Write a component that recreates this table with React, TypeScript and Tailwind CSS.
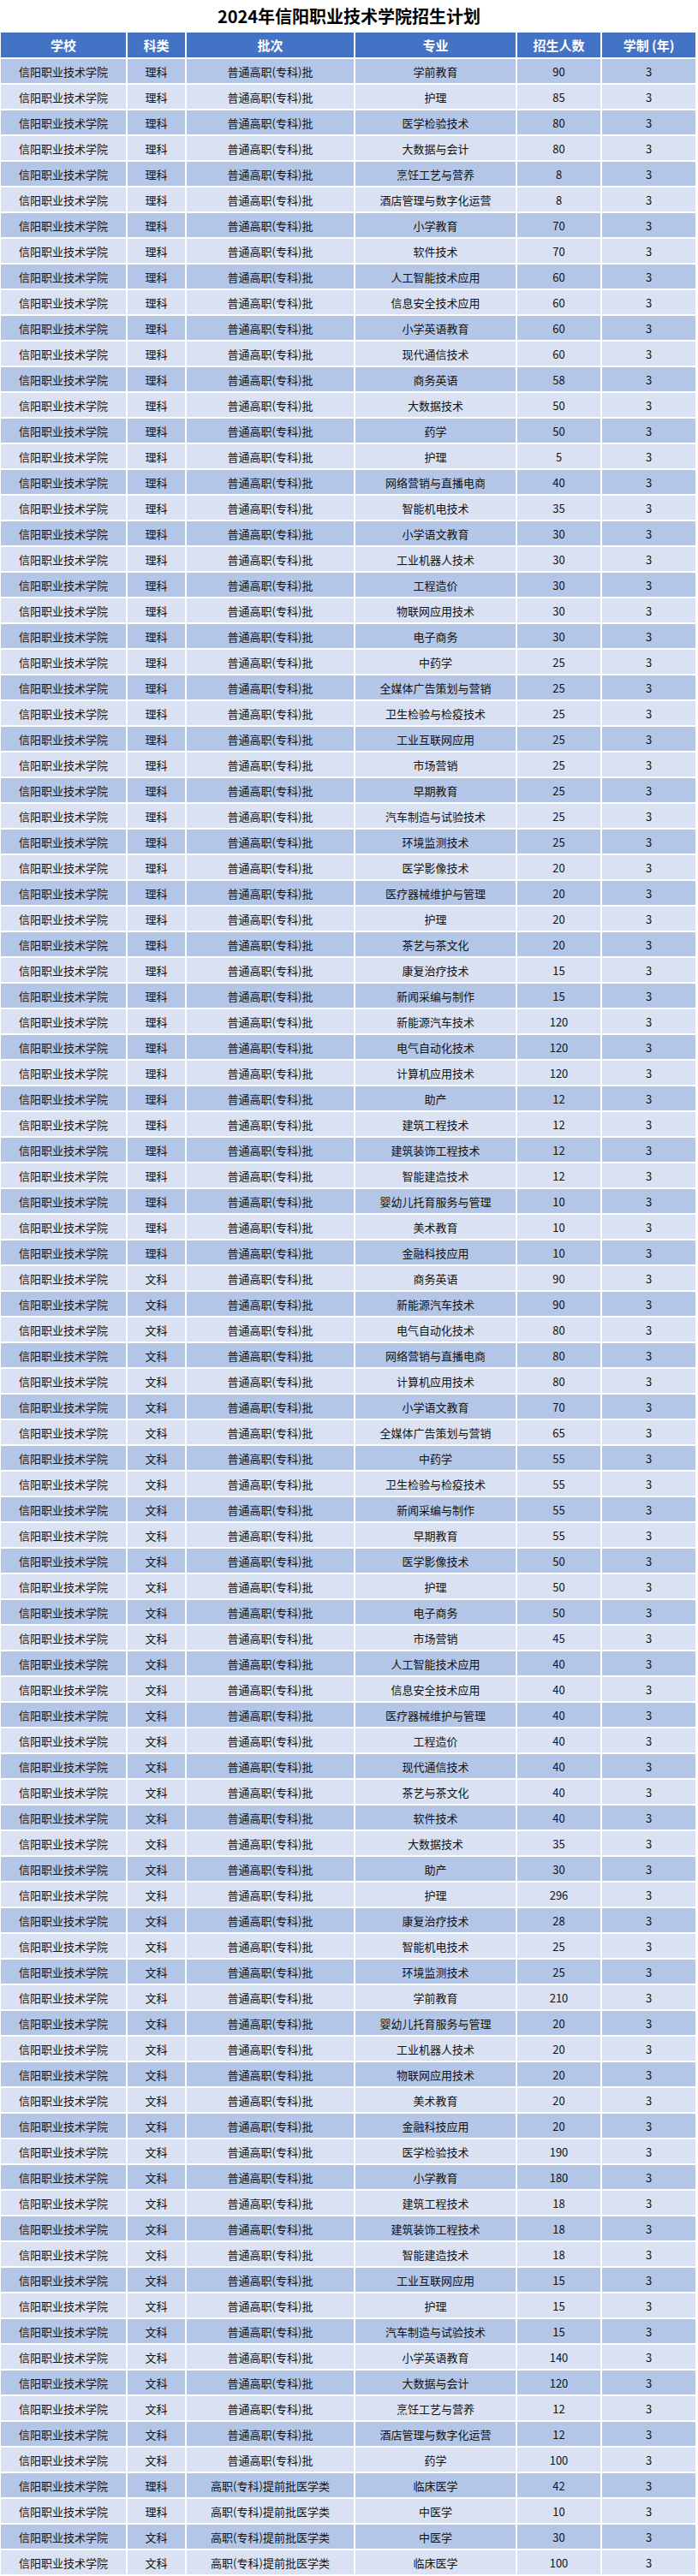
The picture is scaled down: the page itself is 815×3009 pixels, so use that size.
import React from "react";

const L = "理科";
const W = "文科";
const P = "普通高职(专科)批";
const T = "高职(专科)提前批医学类";

const rows: [string, string, string, string][] = [
  [L, P, "学前教育", "90"],
  [L, P, "护理", "85"],
  [L, P, "医学检验技术", "80"],
  [L, P, "大数据与会计", "80"],
  [L, P, "烹饪工艺与营养", "8"],
  [L, P, "酒店管理与数字化运营", "8"],
  [L, P, "小学教育", "70"],
  [L, P, "软件技术", "70"],
  [L, P, "人工智能技术应用", "60"],
  [L, P, "信息安全技术应用", "60"],
  [L, P, "小学英语教育", "60"],
  [L, P, "现代通信技术", "60"],
  [L, P, "商务英语", "58"],
  [L, P, "大数据技术", "50"],
  [L, P, "药学", "50"],
  [L, P, "护理", "5"],
  [L, P, "网络营销与直播电商", "40"],
  [L, P, "智能机电技术", "35"],
  [L, P, "小学语文教育", "30"],
  [L, P, "工业机器人技术", "30"],
  [L, P, "工程造价", "30"],
  [L, P, "物联网应用技术", "30"],
  [L, P, "电子商务", "30"],
  [L, P, "中药学", "25"],
  [L, P, "全媒体广告策划与营销", "25"],
  [L, P, "卫生检验与检疫技术", "25"],
  [L, P, "工业互联网应用", "25"],
  [L, P, "市场营销", "25"],
  [L, P, "早期教育", "25"],
  [L, P, "汽车制造与试验技术", "25"],
  [L, P, "环境监测技术", "25"],
  [L, P, "医学影像技术", "20"],
  [L, P, "医疗器械维护与管理", "20"],
  [L, P, "护理", "20"],
  [L, P, "茶艺与茶文化", "20"],
  [L, P, "康复治疗技术", "15"],
  [L, P, "新闻采编与制作", "15"],
  [L, P, "新能源汽车技术", "120"],
  [L, P, "电气自动化技术", "120"],
  [L, P, "计算机应用技术", "120"],
  [L, P, "助产", "12"],
  [L, P, "建筑工程技术", "12"],
  [L, P, "建筑装饰工程技术", "12"],
  [L, P, "智能建造技术", "12"],
  [L, P, "婴幼儿托育服务与管理", "10"],
  [L, P, "美术教育", "10"],
  [L, P, "金融科技应用", "10"],
  [W, P, "商务英语", "90"],
  [W, P, "新能源汽车技术", "90"],
  [W, P, "电气自动化技术", "80"],
  [W, P, "网络营销与直播电商", "80"],
  [W, P, "计算机应用技术", "80"],
  [W, P, "小学语文教育", "70"],
  [W, P, "全媒体广告策划与营销", "65"],
  [W, P, "中药学", "55"],
  [W, P, "卫生检验与检疫技术", "55"],
  [W, P, "新闻采编与制作", "55"],
  [W, P, "早期教育", "55"],
  [W, P, "医学影像技术", "50"],
  [W, P, "护理", "50"],
  [W, P, "电子商务", "50"],
  [W, P, "市场营销", "45"],
  [W, P, "人工智能技术应用", "40"],
  [W, P, "信息安全技术应用", "40"],
  [W, P, "医疗器械维护与管理", "40"],
  [W, P, "工程造价", "40"],
  [W, P, "现代通信技术", "40"],
  [W, P, "茶艺与茶文化", "40"],
  [W, P, "软件技术", "40"],
  [W, P, "大数据技术", "35"],
  [W, P, "助产", "30"],
  [W, P, "护理", "296"],
  [W, P, "康复治疗技术", "28"],
  [W, P, "智能机电技术", "25"],
  [W, P, "环境监测技术", "25"],
  [W, P, "学前教育", "210"],
  [W, P, "婴幼儿托育服务与管理", "20"],
  [W, P, "工业机器人技术", "20"],
  [W, P, "物联网应用技术", "20"],
  [W, P, "美术教育", "20"],
  [W, P, "金融科技应用", "20"],
  [W, P, "医学检验技术", "190"],
  [W, P, "小学教育", "180"],
  [W, P, "建筑工程技术", "18"],
  [W, P, "建筑装饰工程技术", "18"],
  [W, P, "智能建造技术", "18"],
  [W, P, "工业互联网应用", "15"],
  [W, P, "护理", "15"],
  [W, P, "汽车制造与试验技术", "15"],
  [W, P, "小学英语教育", "140"],
  [W, P, "大数据与会计", "120"],
  [W, P, "烹饪工艺与营养", "12"],
  [W, P, "酒店管理与数字化运营", "12"],
  [W, P, "药学", "100"],
  [L, T, "临床医学", "42"],
  [L, T, "中医学", "10"],
  [W, T, "中医学", "30"],
  [W, T, "临床医学", "100"],
];

const headers = ["学校", "科类", "批次", "专业", "招生人数", "学制 (年)"];

export default function App() {
  return (
    <div className="w-[815px] bg-white font-['Microsoft_YaHei','Noto_Sans_CJK_SC',sans-serif] text-[#111]">
      <div className="h-[38px] flex items-center justify-center text-[20px] font-bold leading-none text-black">
        2024年信阳职业技术学院招生计划
      </div>
      <div className="flex flex-col gap-y-[2px] pl-[1px] pr-[3px] pb-[2px]">
        <div className="grid grid-cols-[146px_67px_195px_187px_97px_109px] gap-x-[2px] h-[29px]">
          {headers.map((h) => (
            <div
              key={h}
              className="bg-[#4472c4] text-white font-bold text-[15px] flex items-center justify-center leading-none"
            >
              {h}
            </div>
          ))}
        </div>
        {rows.map((r, i) => {
          const bg = i % 2 === 0 ? "bg-[#b4c6e7]" : "bg-[#d9e1f2]";
          const cells = ["信阳职业技术学院", r[0], r[1], r[2], r[3], "3"];
          return (
            <div
              key={i}
              className="grid grid-cols-[146px_67px_195px_187px_97px_109px] gap-x-[2px] h-[28px]"
            >
              {cells.map((c, j) => (
                <div
                  key={j}
                  className={`${bg} flex items-center justify-center text-[13px] leading-none`}
                >
                  {c}
                </div>
              ))}
            </div>
          );
        })}
      </div>
    </div>
  );
}
